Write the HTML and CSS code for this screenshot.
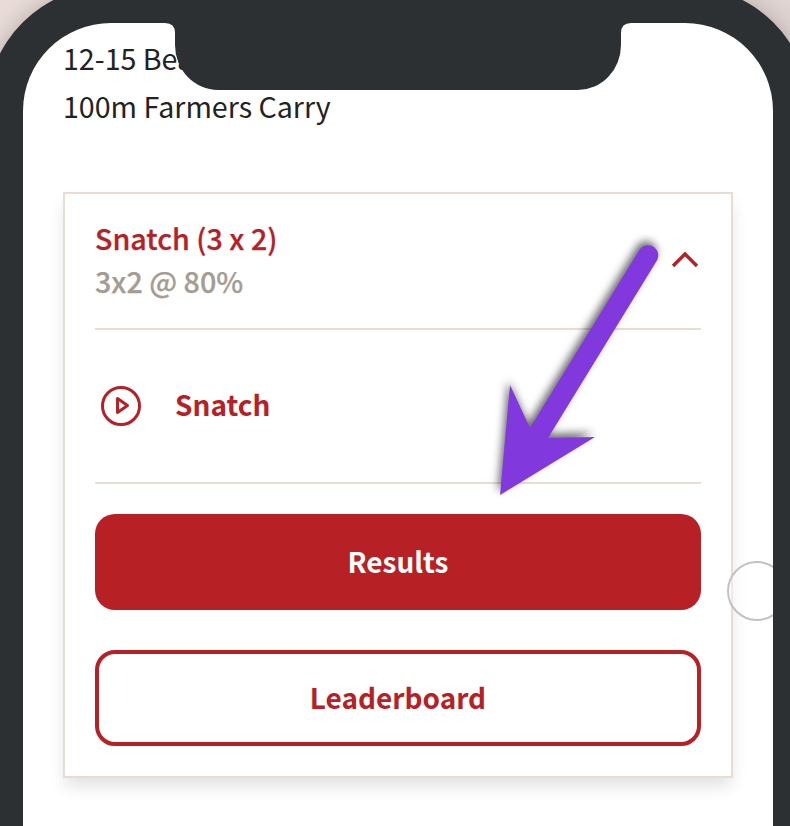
FILE: index.html
```html
<!DOCTYPE html>
<html>

<head>
	<meta charset="utf-8">
	<title>Workout</title>
	<link rel="stylesheet" href="styles.css">
</head>
<body>

	<div class="phone">
		<div class="screen">
			<p class="line">12-15 Bear Crawl</p>
			<p class="line">100m Farmers Carry</p>

			<div class="card">
				<div class="card-head">
					<div>
						<div class="title">Snatch (3 x 2)</div>
						<div class="sub">3x2 @ 80%</div>
					</div>
					<svg class="chevron" width="28" height="18" viewBox="0 0 28 18">
						<path d="M2 16 L14 4 L26 16" fill="none" stroke="#b72025" stroke-width="3.4"/>
					</svg>
				</div>

				<div class="movement">
					<svg width="40" height="40" viewBox="0 0 40 40">
						<circle cx="20" cy="20" r="18.5" fill="none" stroke="#b72025" stroke-width="3"/>
						<path d="M16.5 12.5 L26.5 19.5 L16.5 26.5 Z" fill="none" stroke="#b72025" stroke-width="3" stroke-linejoin="round"/>
					</svg>
					<span>Snatch</span>
				</div>

				<div class="btn btn-fill">Results</div>
				<div class="btn btn-line">Leaderboard</div>
			</div>

			<div class="home-dot"></div>
		</div>

		<svg class="notch" width="466" height="67" viewBox="0 0 466 67">
			<path d="M0 0 H466 Q456 0 456 10 V22 A43 45 0 0 1 413 67 H53 A43 45 0 0 1 10 22 V10 Q10 0 0 0 Z" fill="#2c3033"/>
		</svg>
	</div>

	<!-- стрелка поверх всего -->
	<svg class="arrow" width="790" height="826" viewBox="0 0 790 826">
		<path d="M640 249 A10 10 0 0 1 656 262 L548 438 L595 437 L500 495 L510 385 L530 428 Z" fill="#8139dd"/>
	</svg>

</body>

</html>
```

FILE: styles.css
```css
html, body {
  margin: 0;
  height: 826px;
  overflow: hidden;
}

body {
  position: relative;
  background: linear-gradient(135deg, #e9dcd8, #d8cdcd);
  font-family: "Noto Sans CJK SC", "Source Sans Pro", sans-serif;
}

.phone {
  position: relative;
  width: 750px;
  height: 803px;
  margin: -14px 0 0 -14px;
  padding: 37px 37px 0;
  background: #2c3033;
  border-radius: 125px 125px 0 0;
  box-shadow: 0 0 22px rgba(0, 0, 0, .22);
}

.screen {
  position: relative;
  height: 803px;
  overflow: hidden;
  box-sizing: border-box;
  padding: 11px 40px 0 40px;
  background: #fff;
  border-radius: 88px 88px 0 0;
}

.line {
  margin: 0;
  font-size: 28.6px;
  line-height: 48px;
  color: #222;
}

.card {
  box-sizing: border-box;
  width: 670px;
  height: 586px;
  margin-top: 62px;
  padding: 0 30px;
  border: 2px solid #e8ddd3;
  background: #fff;
  box-shadow: 0 10px 16px -2px rgba(0, 0, 0, .12);
}

.card-head {
  display: flex;
  justify-content: space-between;
  align-items: flex-start;
  height: 134px;
  border-bottom: 2px solid #e8ddd3;
}

.title {
  margin-top: 24px;
  font-size: 28.7px;
  line-height: 40px;
  font-weight: 500;
  -webkit-text-stroke: .25px #b72025;
  color: #b72025;
}

.sub {
  margin-top: 3px;
  font-size: 28.7px;
  line-height: 40px;
  font-weight: 500;
  -webkit-text-stroke: .25px #a59c94;
  color: #a59c94;
}

.chevron {
  margin: 56px 2px 0 0;
}

.movement {
  display: flex;
  align-items: center;
  gap: 34px;
  height: 152px;
  padding-left: 6px;
  border-bottom: 2px solid #e8ddd3;
  font-size: 28px;
  font-weight: 600;
  color: #b72025;
}

.movement span {
  padding-bottom: 4px;
}

.btn {
  display: flex;
  align-items: center;
  justify-content: center;
  box-sizing: border-box;
  height: 96px;
  padding-bottom: 3px;
  border-radius: 20px;
  font-size: 28px;
  font-weight: 600;
}

.btn-fill {
  margin-top: 30px;
  background: #b72025;
  color: #fff;
}

.btn-line {
  margin-top: 40px;
  border: 4px solid #b72025;
  color: #b72025;
}

.home-dot {
  position: absolute;
  left: 704px;
  top: 538px;
  box-sizing: border-box;
  width: 60px;
  height: 60px;
  border: 2px solid #c2c2c2;
  border-radius: 50%;
  background: rgba(255, 255, 255, .4);
}

.notch {
  position: absolute;
  left: 179px;
  top: 37px;
}

.arrow {
  position: absolute;
  left: 0;
  top: 0;
  filter: drop-shadow(-2px -4px 4px rgba(0, 0, 0, .6));
}
```
